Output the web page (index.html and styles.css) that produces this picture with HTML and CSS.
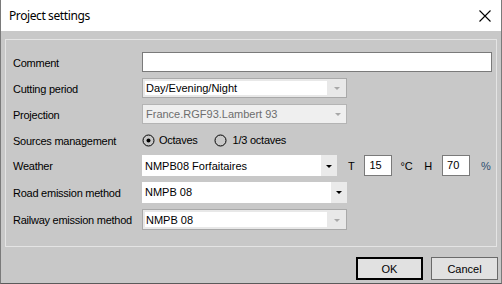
FILE: index.html
```html
<!DOCTYPE html>
<html>
<head>
<meta charset="utf-8">
<link rel="stylesheet" href="styles.css">
</head>
<body>
<div class="window">
  <div class="titlebar">
    <span class="title">Project settings</span>
    <svg class="close" width="12" height="12" viewBox="0 0 12 12"><path d="M0.5 0.5 L11.5 11.5 M11.5 0.5 L0.5 11.5" stroke="#000" stroke-width="1.1" fill="none"/></svg>
  </div>
  <div class="content">
    <div class="group">
      <div class="form">
        <div class="lbl">Comment</div>
        <div class="ctl"><div class="textbox comment"></div></div>

        <div class="lbl">Cutting period</div>
        <div class="ctl">
          <div class="combo ro">
            <div class="field">Day/Evening/Night</div>
            <div class="btn-area"><span class="arrow grey"></span></div>
          </div>
        </div>

        <div class="lbl">Projection</div>
        <div class="ctl">
          <div class="combo disabled">
            <div class="field">France.RGF93.Lambert 93</div>
            <div class="btn-area"><span class="arrow grey"></span></div>
          </div>
        </div>

        <div class="lbl">Sources management</div>
        <div class="ctl radios">
          <span class="radio"><svg width="13" height="13" viewBox="0 0 13 13"><circle cx="6.5" cy="6.5" r="5.5" fill="none" stroke="#000" stroke-width="1"/><circle cx="6.5" cy="6.5" r="2" fill="#000"/></svg><span>Octaves</span></span>
          <span class="radio r2"><svg width="13" height="13" viewBox="0 0 13 13"><circle cx="6.5" cy="6.5" r="5.5" fill="none" stroke="#000" stroke-width="1"/></svg><span>1/3 octaves</span></span>
        </div>

        <div class="lbl">Weather</div>
        <div class="ctl weather">
          <div class="combo flat w-weather">
            <div class="field">NMPB08 Forfaitaires</div>
            <div class="btn-area"><span class="arrow"></span></div>
          </div>
          <span class="unit t">T</span>
          <div class="textbox small">15</div>
          <span class="unit deg">°C</span>
          <span class="unit h">H</span>
          <div class="textbox small">70</div>
          <span class="unit pct">%</span>
        </div>

        <div class="lbl">Road emission method</div>
        <div class="ctl">
          <div class="combo flat tall">
            <div class="field">NMPB 08</div>
            <div class="btn-area"><span class="arrow"></span></div>
          </div>
        </div>

        <div class="lbl">Railway emission method</div>
        <div class="ctl">
          <div class="combo ro tall">
            <div class="field">NMPB 08</div>
            <div class="btn-area"><span class="arrow grey"></span></div>
          </div>
        </div>
      </div>
    </div>
    <div class="buttons">
      <button class="btn default">OK</button>
      <button class="btn">Cancel</button>
    </div>
  </div>
</div>
</body>
</html>
```

FILE: styles.css
```css
html, body {
  margin: 0;
  padding: 0;
  background: #3a3a3a;
}
.window {
  width: 502px;
  height: 284px;
  box-sizing: border-box;
  border-left: 1px solid #7a7a7a;
  border-right: 1px solid #7a7a7a;
  border-bottom: 1px solid #5a5a5a;
  background: #c8c8c8;
  display: flex;
  flex-direction: column;
  font-family: "Liberation Sans", Arial, sans-serif;
  font-size: 11px;
  letter-spacing: -0.25px;
  color: #000;
}
.titlebar {
  height: 31px;
  background: #fff;
  display: flex;
  align-items: center;
  justify-content: space-between;
  padding: 0 8px 0 8px;
}
.title {
  font-family: "Noto Sans", "Open Sans", sans-serif;
  font-size: 12px;
  letter-spacing: -0.4px;
  color: #000;
  margin-top: -1px;
}
.close {
  margin-right: 2px;
  margin-top: 1px;
}
.content {
  flex: 1;
  display: flex;
  flex-direction: column;
}
.group {
  margin: 8px 4px 0 4px;
  height: 208px;
  box-sizing: border-box;
  border: 1px solid #e4e4e4;
  padding: 9px 0 0 7px;
}
.form {
  display: grid;
  grid-template-columns: 129px 1fr;
  grid-template-rows: 26px 26px 26px 26px 25px 28px 27px;
}
.lbl {
  display: flex;
  align-items: center;
  padding-top: 1px;
}
.ctl {
  display: flex;
  align-items: center;
}
.textbox {
  box-sizing: border-box;
  height: 20px;
  background: #fff;
  border: 1px solid #7a7a7a;
  letter-spacing: 0;
}
.textbox.comment {
  width: 350px;
}
.textbox.small {
  width: 28px;
  height: 21px;
  padding: 3px 0 0 4px;
}
.combo {
  box-sizing: border-box;
  width: 205px;
  height: 20px;
  display: flex;
}
.combo .field {
  flex: 1;
  display: flex;
  align-items: center;
  padding-left: 3px;
  letter-spacing: 0;
}
.combo .btn-area {
  width: 17px;
  display: flex;
  align-items: center;
  justify-content: center;
}
.arrow {
  width: 0;
  height: 0;
  border-left: 3px solid transparent;
  border-right: 3px solid transparent;
  border-top: 3px solid #000;
  margin-top: 1px;
}
.arrow.grey {
  border-top-color: #a8a8a8;
}
.combo.ro {
  border: 1px solid #a9a9a9;
  background: #e8e8e8;
  padding: 2px 0 2px 2px;
}
.combo.ro .field {
  background: #fff;
  padding-left: 1px;
}
.combo.ro .btn-area {
  width: 19px;
}
.combo.disabled {
  border: 1px solid #b4b4b4;
  background: #efefef;
  color: #6d6d6d;
}
.combo.disabled .field {
  padding-left: 3px;
}
.combo.flat {
  background: #fff;
  height: 21px;
}
.combo.flat .btn-area {
  background: #eaeaea;
  width: 16px;
}
.combo.flat.tall {
  width: 205px;
}
.combo.ro.tall {
  height: 21px;
}
.w-weather {
  width: 195px !important;
}
.radios {
  padding-left: 0;
}
.radio {
  display: inline-flex;
  align-items: center;
}
.radio svg {
  margin-right: 4px;
}
.radio.r2 {
  margin-left: 16px;
}
.radio.r2 svg {
  margin-right: 6px;
}
.unit {
  display: inline-block;
}
.unit.t {
  margin-left: 11px;
  margin-right: 10px;
}
.unit.deg {
  margin-left: 8px;
}
.unit.h {
  margin-left: 12px;
  margin-right: 10px;
}
.unit.pct {
  margin-left: 11px;
  color: #2e4d6e;
}
.buttons {
  display: flex;
  justify-content: flex-end;
  gap: 8px;
  padding: 10px 3px 0 0;
}
.btn {
  box-sizing: border-box;
  width: 67px;
  height: 23px;
  background: #e1e1e1;
  border: 1px solid #6a6a6a;
  font-family: "Liberation Sans", Arial, sans-serif;
  font-size: 11px;
  letter-spacing: 0;
  color: #000;
  padding: 0;
  margin: 0;
}
.btn.default {
  border: 2px solid #000;
}
```
